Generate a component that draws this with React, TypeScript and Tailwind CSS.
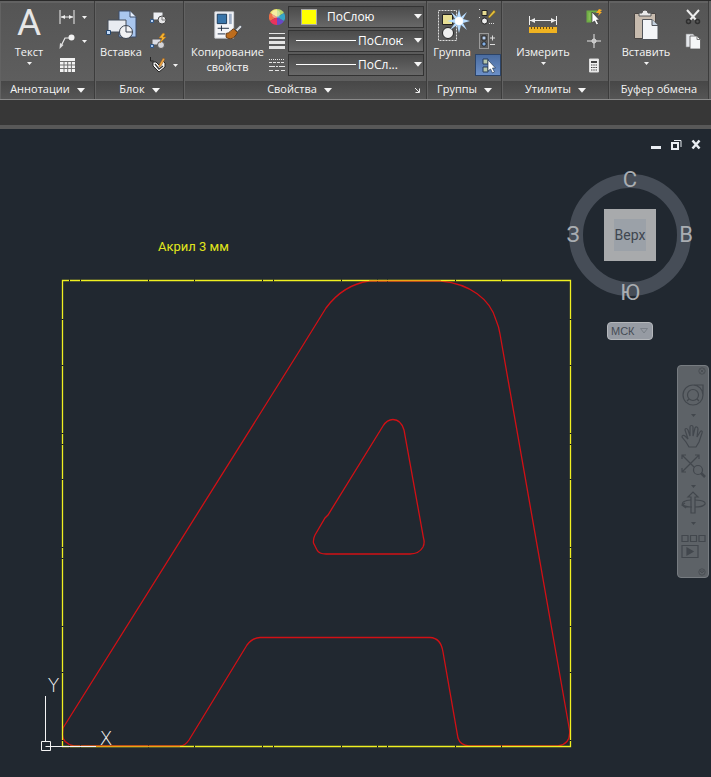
import type { ReactNode } from "react";

function Caret({ small = false }: { small?: boolean }) {
  return small ? (
    <svg width="5" height="3" viewBox="0 0 5 3" className="shrink-0"><path d="M0 0h5L2.500 3z" fill="#f2f2f2" /></svg>
  ) : (
    <svg width="8" height="5" viewBox="0 0 8 5" className="shrink-0"><path d="M0 0h8L4 4.800z" fill="#f5f5f5" /></svg>
  );
}

type PanelProps = { title: string; menu?: boolean; launcher?: boolean; children: ReactNode };

function Panel({ title, menu = true, launcher = false, children }: PanelProps) {
  return (
    <section className="flex min-w-0 flex-col border-r border-[#3c3c3c] pt-0.5 pl-px">
      <div className="flex h-[78px] bg-gradient-to-b from-[#555555] to-[#5e5e5e] pt-[3px]">{children}</div>
      <div className="flex h-[18px] items-center bg-gradient-to-b from-[#474747] to-[#555555]">
        <button className="flex flex-1 items-center justify-center gap-[7px] whitespace-nowrap leading-4">
          <span className="pb-0.5">{title}</span>
          {menu && <Caret />}
        </button>
        {launcher && (
          <button aria-label="Параметры свойств" className="w-3">
            <svg width="7" height="7" viewBox="0 0 7 7"><path d="M1 1l4 4M5.500 1.500v4h-4" stroke="#eee" fill="none" /></svg>
          </button>
        )}
      </div>
    </section>
  );
}

function Large({ icon, label, second, menu, width }: { icon: ReactNode; label: string; second?: string; menu?: boolean; width: string }) {
  return (
    <button className={"flex shrink-0 flex-col items-center leading-[15px] " + width}>
      <span className="flex h-[38px] items-center justify-center">{icon}</span>
      <span>{label}</span>
      {second && <span>{second}</span>}
      {menu && <span className="pt-[3px]"><Caret small /></span>}
    </button>
  );
}

function Small({ label, menu, active, children }: { label: string; menu?: boolean; active?: boolean; children: ReactNode }) {
  return (
    <button aria-label={label} className={"flex h-[22px] items-center gap-[6px] px-[3px] " + (active ? "border border-[#2c4468] bg-gradient-to-b from-[#4a6ca0] to-[#6c90c8] px-[2px]" : "")}>
      <svg width="18" height="18" viewBox="0 0 18 18" fill="none">{children}</svg>
      {menu && <Caret small />}
    </button>
  );
}

const column = "flex flex-col gap-0.5";

function Ribbon() {
  const select = "block h-[22px] w-full appearance-none border border-[#333333] bg-gradient-to-b from-[#4b4b4b] to-[#686868] pr-5 text-[12px] text-white outline-none";
  return (
    <header className="grid grid-cols-[95fr_89fr_243fr_75fr_107fr_100fr] border-b border-[#8a8a8a] border-t border-t-[#2a2a2a] bg-[#626262] pr-0.5 text-[11px] text-[#f5f5f5]">
      <Panel title="Аннотации">
        <Large width="ml-0.5 w-[52px]" label="Текст" menu icon={<span className="self-start font-['Roboto'] text-[37px] leading-[34px] text-[#e6e6e6]">A</span>} />
        <div className={column}>
          <Small label="Размер" menu>
            <path d="M2 2v14M16 2v14M3 9h12" stroke="#eee" />
            <path d="M3 9l4-2v4zM15 9l-4-2v4z" fill="#eee" />
          </Small>
          <Small label="Выноска" menu>
            <path d="M3 14L7 6h5" stroke="#e8e8e8" strokeWidth="1.200" />
            <path d="M1.500 17l.5-6 3.500 2z" fill="#ddd" /><circle cx="13.500" cy="5.500" r="3" fill="#f2f2f2" />
          </Small>
          <Small label="Таблица">
            <path d="M2 2h15v14H2z" fill="#f3f3f3" />
            <path d="M2 5.500h15M2 9h15M2 12.500h15M6 5.500V16M9.700 5.500V16M13.400 5.500V16" stroke="#707070" />
          </Small>
        </div>
      </Panel>

      <Panel title="Блок">
        <Large width="w-[50px]" label="Вставка" icon={
          <svg width="34" height="32" viewBox="0 0 34 32">
            <path d="M15 2h11l6 6v20H15z" fill="#a9c6ee" stroke="#3c4d68" /><path d="M26 2v6h6" fill="#e6effb" stroke="#3c4d68" />
            <path d="M4 11h18v12H4z" fill="#e9ecf1" stroke="#444c59" /><circle cx="22" cy="23" r="6.500" fill="#f1f2f4" stroke="#3b4350" />
            <path d="M22 17v6h6" stroke="#3b4350" fill="none" /><path d="M2.500 21.500h4v4h-4z" fill="#c3daf7" stroke="#24476f" />
          </svg>} />
        <div className={column}>
          <Small label="Создать">
            <path d="M4 4h10v8H4z" fill="#eceef3" stroke="#555" /><circle cx="13" cy="12" r="4" fill="#e6e6e8" stroke="#444" /><path d="M13 8v4h4" stroke="#777" /><path d="M1.500 11.500h3v3h-3z" fill="#b9d2f2" stroke="#315684" />
          </Small>
          <Small label="Редактор блоков">
            <path d="M3 7h9v6H3z" fill="#dcdde5" stroke="#555" /><circle cx="12" cy="13" r="3.500" fill="#d4d4d8" stroke="#555" /><path d="M1.500 12.500h3v3h-3z" fill="#a8c5ed" stroke="#315684" /><path d="M14 1l-4 5h3l-2 5 6-6h-3l2-3z" fill="#f9b52c" stroke="#ae6a18" strokeWidth=".5" />
          </Small>
          <Small label="Атрибуты" menu>
            <path d="M1.500 1v4h3" stroke="#222" /><path d="M4 6h3l3 3 4-4 2 2v4l-6 5-6-6z" fill="#fafafa" stroke="#222" /><path d="M6 8l4 5 4-3" stroke="#333" strokeWidth="1.300" /><path d="M10 9l4-7 2 1-4 7-2 1z" fill="#eda544" stroke="#7d4f1c" strokeWidth=".5" />
          </Small>
        </div>
      </Panel>

      <Panel title="Свойства" launcher>
        <Large width="ml-1 w-[77px]" label="Копирование" second="свойств" icon={
          <svg width="30" height="30" viewBox="0 0 32 32">
            <path d="M2 2h20v28H2z" fill="#f4f5f8" stroke="#d2d5db" /><path d="M4.500 4.500h10v10h-10z" fill="#3975aa" stroke="#183554" /><path d="M17 4h3v11h-3z" fill="#9dadc5" />
            <path d="M5 19.500h12M9 16.500v6M5 25.500h8" stroke="#17263d" /><path d="M24 21l5-5 2 2-5 5z" fill="#d8dce0" stroke="#565c63" /><path d="M14 25c4 0 5-4 8-5l4 4c-3 7-8 8-12 5z" fill="#bd6d1e" stroke="#5c3514" />
          </svg>} />
        <div className={column}>
          <span className="flex h-[22px] w-[22px] items-center justify-center">
            <svg width="16" height="16" viewBox="0 0 16 16"><path d="M8 8V0a8 8 0 017 4z" fill="#b7d66b" /><path d="M8 8V0a8 8 0 00-7 4z" fill="#f2e46f" /><path d="M8 8L1 4a8 8 0 000 8z" fill="#ef7047" /><path d="M8 8l-7 4a8 8 0 007 4z" fill="#e8335d" /><path d="M8 8v8a8 8 0 007-4z" fill="#6949c6" /><path d="M8 8l7 4a8 8 0 000-8z" fill="#37a4c8" /><circle cx="7" cy="5" r="4" fill="#fff" opacity=".35" /></svg>
          </span>
          <span className="flex h-[22px] w-[22px] items-center justify-center">
            <svg width="16" height="16" viewBox="0 0 16 16" fill="#e4e4e4"><path d="M0 0h16v1H0zM0 4h16v2H0zM0 8h16v3H0zM0 13h16v3H0z" /></svg>
          </span>
          <span className="flex h-[22px] w-[22px] items-center justify-center">
            <svg width="16" height="16" viewBox="0 0 16 16" stroke="#e4e4e4"><path d="M0 2.500h16" strokeDasharray="1 1" /><path d="M0 5.500h16" strokeDasharray="3 1" /><path d="M0 9.500h16" strokeDasharray="6 1 2 1" /><path d="M0 13.500h16" strokeDasharray="4 2" /></svg>
          </span>
        </div>
        <div className={"min-w-0 flex-1 pr-0.5 " + column}>
          <div className="relative">
            <select aria-label="Цвет" className={select + " pl-[38px]"}><option>ПоСлою</option></select>
            <span className="pointer-events-none absolute top-[3px] left-[13px] size-4 border border-[#a9a9a9] bg-[#ffff00]" />
            <span className="pointer-events-none absolute top-2 right-[2px]"><Caret /></span>
          </div>
          <div className="relative">
            <select aria-label="Вес линий" className={select + " pl-[69px]"}><option>ПоСлою</option></select>
            <span className="pointer-events-none absolute top-[10px] left-2 h-px w-[60px] bg-white" />
            <span className="pointer-events-none absolute top-2 right-[2px]"><Caret /></span>
          </div>
          <div className="relative">
            <select aria-label="Тип линий" className={select + " pl-[69px]"}><option>ПоСл...</option></select>
            <span className="pointer-events-none absolute top-[10px] left-2 h-px w-[60px] bg-white" />
            <span className="pointer-events-none absolute top-2 right-[2px]"><Caret /></span>
          </div>
        </div>
      </Panel>

      <Panel title="Группы">
        <Large width="ml-px w-[46px]" label="Группа" icon={
          <svg width="34" height="34" viewBox="0 0 34 34" className="ml-1">
            <path d="M1.500 2.500h18v30h-18z" fill="none" stroke="#ddd" strokeDasharray="2 1" /><path d="M5.500 6.500h10v10h-10z" fill="#e8df94" stroke="#222" />
            <circle cx="11" cy="25" r="5.500" fill="#eee" stroke="#222" /><path d="M22 1l2 8 6-5-4 7 7 2-7 2 4 7-6-5-2 8-2-8-7 5 5-7-8-2 8-2-4-7 6 5z" fill="#b7dcff" /><circle cx="22" cy="13" r="4" fill="#fff" />
          </svg>} />
        <div className={column}>
          <Small label="Изменить группу"><path d="M4 2.500h5v5H4z" fill="#e7db91" stroke="#222" /><circle cx="6.500" cy="13" r="3" fill="#eee" stroke="#222" /><path d="M10 9l6-7 1.500 2-6 6z" fill="#e8c33c" stroke="#755613" strokeWidth=".5" /><path d="M1 1.500h2M1 9.500h2M11 15.500h5" stroke="#ddd" strokeDasharray="1 1" /></Small>
          <Small label="Добавить в группу"><path d="M1.500 1.500h9v15h-9z" stroke="#ddd" strokeDasharray="1 1" /><path d="M4 4h4v4H4z" fill="#b6cdec" stroke="#222" /><circle cx="6" cy="12" r="2.200" fill="#83afe4" stroke="#222" /><path d="M12 6h5M14.500 3.500v5M12 12.500h5" stroke="#ddd" /></Small>
          <Small label="Выбор группы" active><path d="M4 3h5v5H4zM4 11h5v5H4z" fill="#b5c5ab" stroke="#263b58" /><path d="M9 4v11l2.500-2 2 4 2-1-2-4h3z" fill="#fff" stroke="#273b55" strokeWidth=".7" /></Small>
        </div>
      </Panel>

      <Panel title="Утилиты">
        <Large width="ml-1 w-[72px]" label="Измерить" menu icon={
          <svg width="30" height="18" viewBox="0 0 30 18"><path d="M1.500 0v9M28.500 0v9M2 4.500h26" stroke="#eee" /><path d="M2 4.500L7 2v5zM28 4.500L23 2v5z" fill="#eee" /><path d="M1 11h28v6H1z" fill="#f0b321" /><path d="M3.500 11v2M6.500 11v2M9.500 11v2M12.500 11v2M15.500 11v2M18.500 11v2M21.500 11v2M24.500 11v2" stroke="#6b4c10" /></svg>} />
        <div className={column + " flex-1 items-center"}>
          <Small label="Быстрый выбор"><path d="M2.500 3.500h4v10h-4zM6.500 3.500h6" fill="#87bd57" stroke="#6fae45" strokeWidth="2" /><path d="M7 4v11l2.500-2 2 4 2-1-2-4h3z" fill="#fff" stroke="#333" strokeWidth=".7" /><path d="M14 1l-3 4h3l-1 3 4-4h-2l2-2z" fill="#f7ad26" /></Small>
          <Small label="Координаты"><path d="M9 2v14M2 9h14" stroke="#e5e5e5" /><circle cx="9" cy="9" r="2" stroke="#e5e5e5" /></Small>
          <Small label="Калькулятор"><path d="M4.500 3h9v13h-9z" fill="#f1f1f1" stroke="#ddd" /><path d="M6 5h6v2H6z" fill="#444" /><path d="M6 9h6M6 11.500h6M6 14h6" stroke="#444" strokeDasharray="1.500 .75" /></Small>
        </div>
      </Panel>

      <Panel title="Буфер обмена" menu={false}>
        <Large width="ml-1 w-[64px]" label="Вставить" menu icon={
          <svg width="26" height="32" viewBox="0 0 26 32"><path d="M1.500 4.500h21v25h-21z" fill="#c7bbae" stroke="#494543" /><path d="M6 7V4h3a3 3 0 016 0h3v3z" fill="#e9e9e9" stroke="#555" /><path d="M9.500 10.500H19l6 6v14H9.500z" fill="#f3f5f8" stroke="#50545a" /><path d="M19 10.500v6h6" fill="#c4d1df" stroke="#50545a" /></svg>} />
        <div className={column + " flex-1 items-center"}>
          <Small label="Вырезать"><path d="M3 2l9 10M15 2L6 12" stroke="#eee" strokeWidth="2" /><circle cx="4.500" cy="13.500" r="2" stroke="#2f2f2f" strokeWidth="1.500" /><circle cx="13.500" cy="13.500" r="2" stroke="#2f2f2f" strokeWidth="1.500" /></Small>
          <Small label="Копировать"><path d="M2 2h7l3 3v10H2z" fill="#e4e7eb" stroke="#888" strokeWidth=".6" /><path d="M6 4h7l3.500 3.500V17H6z" fill="#f5f6f7" stroke="#555" strokeWidth=".8" /><path d="M13 4v3.500h3.500" stroke="#777" /></Small>
        </div>
      </Panel>
    </header>
  );
}

const xTicks = [69, 80, 148, 194, 262, 273, 341, 377, 387, 455, 501];
const yTicks = [319, 365, 433, 444, 479, 547, 558, 626, 672, 740];

function Drawing() {
  return (
    <svg viewBox="0 129 711 648" className="block w-full" fill="none">
      <text x="158" y="251" className="font-['Roboto'] text-[13px]" fill="#e2e61c">Акрил 3 мм</text>
      <g stroke="#d21015" strokeWidth="1.300">
        <path d="M63 728L300 350L326 308Q343 285 369 281H441C470 284 490 299 496 320Q499 327 500 334L569.500 730Q571 744 558 746H469Q460 745 458 738L443 652Q441 638 430 637.500H260Q252 638 247 645L189 740Q185 746 180 746H74Q62 743 62.500 734Z" />
        <path d="M383 426Q387 419.500 393 419.500Q401 419.500 404 430L423.500 538Q425 543 423 547Q419 554 410 554H326Q319 554 317 550L313.500 543Q313 539 315 535L325 518L328 515Z" />
      </g>
      <path d="M62.500 280.500h508v466h-508z" stroke="#f0f020" strokeWidth="1.300" />
      <g fill="#15191a">
        {xTicks.map((x) => <path key={x} d={`M${x} 279.500h1v2h-1zM${x} 745.500h1v2h-1z`} />)}
        {yTicks.map((y) => <path key={y} d={`M61.500 ${y}h2v1h-2zM569.500 ${y}h2v1h-2z`} />)}
      </g>
      <path d="M180 746.500H96M369 280.500H441" stroke="#eca414" />
      <path d="M41.500 741.500h9v9h-9zM45.500 741V696M45.500 746.500H96" stroke="#f4f4f4" />
      <g fill="#f4f4f4" className="font-['DejaVu_Sans_Light','DejaVu_Sans'] text-[19px] font-extralight" textAnchor="middle">
        <text x="53.500" y="692">Y</text>
        <text x="106" y="745">X</text>
      </g>
    </svg>
  );
}

function ViewCube() {
  const letter = "absolute flex h-6 w-6 items-center justify-center font-['Roboto'] text-[22px] leading-6 text-[#a9adb2]";
  return (
    <div className="flex w-[122px] flex-col items-center gap-[26px]">
      <div className="relative flex size-[122px] items-center justify-center rounded-full border-[14px] border-[#464d57]">
        <button className={letter + " -top-5"}>С</button>
        <button className={letter + " -bottom-[23px]"}>Ю</button>
        <button className={letter + " -left-[22px]"}>З</button>
        <button className={letter + " -right-[21px]"}>В</button>
        <button className="flex size-[52px] items-center justify-center bg-[#a8aaac]">
          <span className="flex size-8 items-center justify-center bg-[#9ba1a8] font-['Liberation_Sans_Narrow','Roboto'] text-[14px] text-[#3f464f]">Верх</span>
        </button>
      </div>
      <div className="relative">
        <select aria-label="Система координат" className="block h-[18px] w-[46px] appearance-none rounded border border-[#b4b7bb] bg-[#969ba3] pl-[3px] font-['Liberation_Sans'] text-[11px] text-[#454b54] outline-none"><option>МСК</option></select>
        <svg width="8" height="6" viewBox="0 0 8 6" className="pointer-events-none absolute top-[6px] right-[5px]"><path d="M.5.5h7L4 5z" fill="none" stroke="#7a8088" /></svg>
      </div>
    </div>
  );
}

function NavTool({ label, height, caret, children }: { label: string; height: string; caret?: boolean; children: ReactNode }) {
  return (
    <button aria-label={label} className={"flex w-full flex-col items-center " + height}>
      <svg width="26" height="26" viewBox="0 0 26 26" fill="none" stroke="#42474d" strokeWidth="1.200" className="shrink-0">{children}</svg>
      {caret && <svg width="5" height="3" viewBox="0 0 5 3" className="mt-[6px]"><path d="M0 0h5L2.500 3z" fill="#42474d" /></svg>}
    </button>
  );
}

function NavBar() {
  return (
    <nav className="flex w-8 flex-col rounded-[4px] border border-[#777c81] bg-[#5d6267] py-px">
      <button aria-label="Закрыть панель" className="flex h-[15px] justify-end pr-0.5"><svg width="8" height="8" viewBox="0 0 8 8" fill="none" stroke="#4a4f54"><circle cx="4" cy="4" r="3.200" /><path d="M2.500 2.500l3 3M5.500 2.500l-3 3" /></svg></button>
      <NavTool label="Штурвал" height="h-[42px]" caret><path d="M3 13a10 10 0 1110 10 10 10 0 01-10-10zM14 3h9v10" /><circle cx="13" cy="13" r="5.500" /><path d="M7 19l2-2M19 19l-2-2" /></NavTool>
      <NavTool label="Панорамирование" height="h-[29px]"><path d="M9 23l-3-5-4-5c0-2 2-2 3-1l3 3L5 6c0-2 2-2 3 0l2 6V3c0-2 3-2 3 0v9l2-8c1-2 3-1 3 1l-1 8 3-5c1-2 3-1 2 1l-3 9-3 5z" /></NavTool>
      <NavTool label="Показать до границ" height="h-[37px]" caret><path d="M2 2l17 17M2 19L19 2M2 6V2h4M15 2h4v4M2 15v4h4" /><circle cx="18" cy="17" r="4.500" fill="#5d6267" /><path d="M21 20l4 4" strokeWidth="2.500" /></NavTool>
      <NavTool label="Орбита" height="h-[44px]" caret><path d="M11 23V7H8l5-5 5 5h-3v16z" /><path d="M11 10C4 10 1 13 3 15c2 2 6 2 9 2M15 10c9 0 12 3 9 5-2 2-5 2-9 2M5 13l-3 2 4 3" /></NavTool>
      <NavTool label="Аниматор" height="h-[28px]"><path d="M2 1.500h6v6H2zM10.500 1.500h6v6h-6zM19 1.500h6v6h-6zM2 11.500h16v12H2z" /><path d="M7 14v7l6-3.500z" fill="#42474d" /></NavTool>
      <button aria-label="Параметры панели" className="flex h-[14px] items-end justify-end pr-0.5"><svg width="8" height="8" viewBox="0 0 8 8" fill="none" stroke="#4a4f54"><circle cx="4" cy="4" r="3.200" /><path d="M2 3h4L4 5z" /></svg></button>
    </nav>
  );
}

export default function App() {
  return (
    <div className="flex min-h-screen flex-col bg-[#212830] font-['Open_Sans','Noto_Sans',sans-serif]">
      <Ribbon />
      <div className="h-[29px] border-b-4 border-[#585858] bg-[#373737]" />
      <main className="relative flex-1">
        <Drawing />
        <div className="absolute top-[10px] right-[9px] flex items-center gap-[9px]">
          <button aria-label="Свернуть"><svg width="11" height="11" viewBox="0 0 11 11"><path d="M0 7h10v3H0z" fill="#e9edf2" /></svg></button>
          <button aria-label="Восстановить"><svg width="11" height="11" viewBox="0 0 11 11" fill="none" stroke="#e9edf2" strokeWidth="2"><path d="M1 4h6v6H1z" /><path d="M3 1.500h7V8" strokeWidth="1" /></svg></button>
          <button aria-label="Закрыть"><svg width="11" height="11" viewBox="0 0 11 11"><path d="M1.500 1.500l7 8M8.500 1.500l-7 8" stroke="#e9edf2" strokeWidth="2.500" /></svg></button>
        </div>
        <div className="absolute top-[45px] right-5"><ViewCube /></div>
        <div className="absolute top-[236px] right-0.5"><NavBar /></div>
      </main>
    </div>
  );
}
